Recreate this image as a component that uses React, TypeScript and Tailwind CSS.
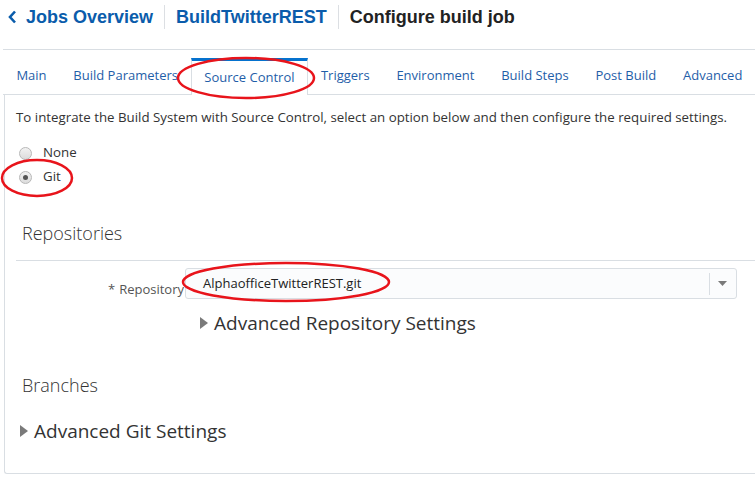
import React from "react";

const sans = { fontFamily: '"Open Sans", "Noto Sans", sans-serif' };

function Tab({ label, active }: { label: string; active?: boolean }) {
  if (active) {
    return (
      <div className="shrink-0 whitespace-nowrap h-[37px] px-[12px] flex items-center border-t-[3px] border-t-[#0572ce] border-x border-x-[#d9dee3] bg-white -mb-px text-[13px] text-[#1f5ea8]">
        {label}
      </div>
    );
  }
  return (
    <div className="shrink-0 whitespace-nowrap h-[37px] px-[13.4px] flex items-center text-[13px] text-[#1f5ea8]">{label}</div>
  );
}

function Radio({ checked }: { checked?: boolean }) {
  return (
    <span className="w-[13px] h-[13px] rounded-full border border-[#b8b8b8] bg-gradient-to-b from-[#f2f2f2] to-[#dcdcdc] flex items-center justify-center">
      {checked && <span className="w-[5px] h-[5px] rounded-full bg-[#555]" />}
    </span>
  );
}

function Tri() {
  return (
    <svg width="8" height="12" viewBox="0 0 8 12" className="shrink-0">
      <path d="M0 0 L8 6 L0 12 Z" fill="#7a7a7a" />
    </svg>
  );
}

export default function App() {
  return (
    <div className="relative w-[755px] h-[480px] overflow-hidden bg-white" style={sans}>
      {/* header */}
      <div className="h-[49px] flex items-start pt-[5px] pl-[8px]" style={{ fontFamily: '"Liberation Sans", Arial, sans-serif' }}>
        <div className="flex items-center h-[24px]">
          <svg width="9" height="14" viewBox="0 0 9 14" className="mr-[9px]">
            <path d="M7 1.5 L2 7 L7 12.5" stroke="#0a5cab" strokeWidth="2.6" fill="none" />
          </svg>
          <span className="text-[18px] font-bold text-[#0a5cab]">Jobs Overview</span>
          <span className="w-px h-[24px] bg-[#dcdfe3] mx-[11px]" />
          <span className="text-[18px] font-bold text-[#0a5cab]">BuildTwitterREST</span>
          <span className="w-px h-[24px] bg-[#dcdfe3] mx-[11px]" />
          <span className="text-[18px] font-bold text-[#222]">Configure build job</span>
        </div>
      </div>
      {/* tabs */}
      <div className="ml-[3px] w-[800px] border-t border-[#d9dee3] pt-[7px] border-b flex items-end">
        <Tab label="Main" />
        <Tab label="Build Parameters" />
        <Tab label="Source Control" active />
        <Tab label="Triggers" />
        <Tab label="Environment" />
        <Tab label="Build Steps" />
        <Tab label="Post Build" />
        <Tab label="Advanced" />
      </div>
      {/* panel */}
      <div className="ml-[4px] w-[770px] h-[379px] border-l border-b border-[#d9dee3] rounded-bl-[3px] pl-[11px] pt-[13px]">
        <p className="text-[13.3px] text-[#333] leading-[18px]">
          To integrate the Build System with Source Control, select an option below and then configure the required settings.
        </p>
        <div className="mt-[18px] flex flex-col gap-[6px] text-[13.3px] text-[#333]">
          <label className="flex items-center gap-[11px] pl-[3px] h-[18px]">
            <Radio />
            None
          </label>
          <label className="flex items-center gap-[11px] pl-[3px] h-[18px]">
            <Radio checked />
            Git
          </label>
        </div>
        <div className="mt-[35px] pl-[6px] text-[18px] font-light text-[#333] leading-[24px]">Repositories</div>
        <div className="mt-[15px] border-t border-[#d9dee3] pt-[7px]">
          <div className="flex items-center">
            <div className="w-[169px] text-right pr-px text-[13px] text-[#555] pt-[12px]">
              <span className="mr-[4px]">*</span>Repository
            </div>
            <div className="w-[552px] h-[31px] border border-[#d9dee3] rounded-[3px] bg-[#fbfcfd] flex items-center">
              <span className="flex-1 pl-[17px] text-[13px] text-[#222]">AlphaofficeTwitterREST.git</span>
              <span className="w-px h-[22px] bg-[#d9dee3]" />
              <svg width="26" height="10" viewBox="0 0 26 10">
                <path d="M8 2 L17 2 L12.5 7 Z" fill="#7a7a7a" />
              </svg>
            </div>
          </div>
          <div className="ml-[184px] mt-[10px] flex items-center gap-[6px] text-[19px] text-[#333] leading-[26px]">
            <Tri />
            Advanced Repository Settings
          </div>
        </div>
        <div className="mt-[37px] pl-[6px] text-[18px] font-light text-[#333] leading-[24px]">Branches</div>
        <div className="mt-[21px] pl-[4px] flex items-center gap-[6px] text-[19px] text-[#333] leading-[26px]">
          <Tri />
          Advanced Git Settings
        </div>
      </div>
      {/* annotation ellipses */}
      <svg className="absolute inset-0 pointer-events-none" width="755" height="480">
        <ellipse cx="246" cy="78" rx="68" ry="20" fill="none" stroke="#e8141b" strokeWidth="2.5" />
        <ellipse cx="37" cy="178" rx="35" ry="18" fill="none" stroke="#e8141b" strokeWidth="2.5" />
        <ellipse cx="286" cy="282" rx="103" ry="19" fill="none" stroke="#e8141b" strokeWidth="2.5" />
      </svg>
    </div>
  );
}
